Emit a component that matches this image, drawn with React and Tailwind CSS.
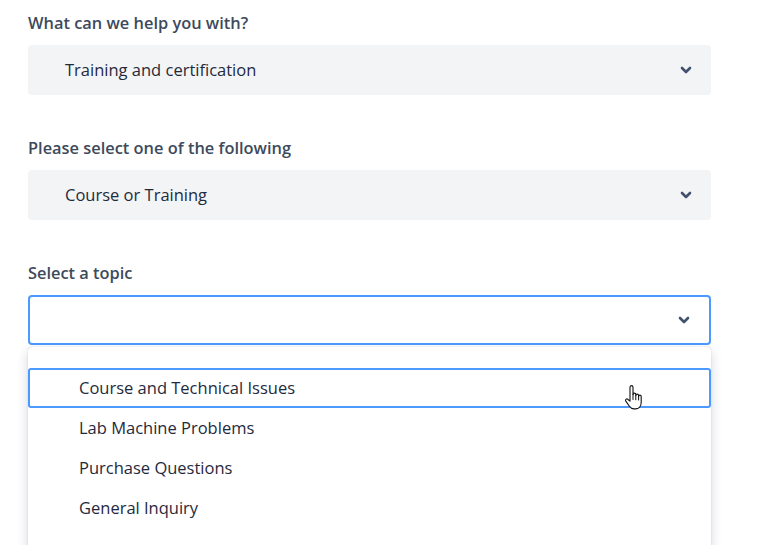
// Help request form with open topic dropdown
function Chevron() {
  return (
    <svg width="12" height="8" viewBox="0 0 12 8" className="text-[#42526e]">
      <path d="M2 2 L6 6 L10 2" fill="none" stroke="currentColor" strokeWidth="2.6" strokeLinecap="round" strokeLinejoin="round" />
    </svg>
  );
}

function HandCursor() {
  return (
    <svg width="20" height="26" viewBox="0 0 20 26" className="absolute right-[65px] top-[15px]">
      <path
        d="M6 2.2c0-1 .7-1.6 1.5-1.6S9 1.2 9 2.2v7.3c0-.9.6-1.4 1.4-1.4s1.4.5 1.4 1.4v1c0-.9.6-1.4 1.4-1.4s1.4.5 1.4 1.4v.9c0-.8.6-1.3 1.3-1.3s1.3.5 1.3 1.3v5.8c0 4-2.3 6.7-5.8 6.7H9.9c-2.1 0-3.3-1-4.5-2.7l-3.6-5.1c-.5-.8-.3-1.6.3-2s1.4-.2 1.9.4L6 16.1V2.2z"
        fill="#fff"
        stroke="#111"
        strokeWidth="1.1"
        strokeLinejoin="round"
      />
      <path d="M9 9.5v5M11.8 10.5v4.3M14.6 11.4v3.6" stroke="#111" strokeWidth="1" strokeLinecap="round" />
    </svg>
  );
}

function Field({ label, value, focused }) {
  return (
    <div>
      <div className="text-[16.4px] font-semibold text-[#3d4a5c] leading-[22px]">{label}</div>
      <div
        className={`mt-[11px] h-[50px] flex items-center justify-between pl-[37px] pr-[19px] rounded-[4px] ${
          focused ? "bg-white border-2 border-[#4c9aff]" : "bg-[#f3f4f6]"
        }`}
      >
        <span className="text-[16.5px] text-[#1f2a3c]">{value}</span>
        <Chevron />
      </div>
    </div>
  );
}

const topics = ["Course and Technical Issues", "Lab Machine Problems", "Purchase Questions", "General Inquiry"];

export default function App() {
  return (
    <div
      className="w-[759px] h-[545px] overflow-hidden bg-white"
      style={{ fontFamily: '"Open Sans", "Noto Sans", sans-serif' }}
    >
      <div className="ml-[28px] w-[683px] pt-[12px] flex flex-col gap-[42px]">
        <Field label="What can we help you with?" value="Training and certification" />
        <Field label="Please select one of the following" value="Course or Training" />
        <div>
          <Field label="Select a topic" value="" focused />
          <div className="mt-[2px] bg-white rounded-[4px] shadow-[0_4px_12px_rgba(9,30,66,0.18),0_0_1px_rgba(9,30,66,0.3)] pt-[21px] pb-[20px]">
            {topics.map((t, i) => (
              <div
                key={t}
                className={`relative h-[40px] flex items-center pl-[49px] text-[16.5px] text-[#1f2a3c] ${
                  i === 0 ? "border-2 border-[#4c9aff] rounded-[3px]" : "border-2 border-transparent"
                }`}
              >
                {t}
                {i === 0 && <HandCursor />}
              </div>
            ))}
          </div>
        </div>
      </div>
    </div>
  );
}
